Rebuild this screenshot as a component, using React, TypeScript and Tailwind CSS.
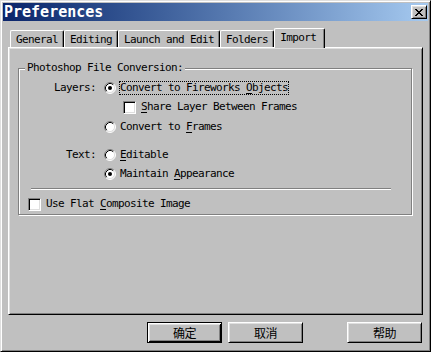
import React from 'react';

const mono = { fontFamily: '"DejaVu Sans Mono", monospace' };

const Radio: React.FC<{ checked?: boolean }> = ({ checked }) => (
  <svg width="12" height="12" viewBox="0 0 12 12" className="shrink-0">
    <circle cx="6" cy="6" r="5" fill="#fff" />
    <path d="M2.11 9.89A5.5 5.5 0 0 1 9.89 2.11" fill="none" stroke="#808080" />
    <path d="M9.89 2.11A5.5 5.5 0 0 1 2.11 9.89" fill="none" stroke="#fff" />
    <path d="M2.82 9.18A4.5 4.5 0 0 1 9.18 2.82" fill="none" stroke="#000" />
    <path d="M9.18 2.82A4.5 4.5 0 0 1 2.82 9.18" fill="none" stroke="#dfdfdf" />
    {checked && <circle cx="6" cy="6" r="2" fill="#000" />}
  </svg>
);

const Checkbox: React.FC = () => (
  <div className="w-[13px] h-[13px] shrink-0 bg-white border border-t-[#808080] border-l-[#808080] border-r-white border-b-white shadow-[inset_1px_1px_0_#000,inset_-1px_-1px_0_#dfdfdf]" />
);

// text with one underlined access key
const Label: React.FC<{ text: string; k: number; focus?: boolean }> = ({ text, k, focus }) => (
  <span
    className={`h-[14px] leading-[12px] whitespace-pre border ${focus ? 'border-dotted border-black' : 'border-transparent'}`}
  >
    {text.slice(0, k)}
    <span className="underline underline-offset-[2px]">{text[k]}</span>
    {text.slice(k + 1)}
  </span>
);

const Tab: React.FC<{ label: string; active?: boolean }> = ({ label, active }) => (
  <div
    className={`pt-[2px] leading-[14px] bg-[#c0c0c0] border-l border-t border-white border-r border-r-black shadow-[inset_-1px_0_0_#808080] rounded-tl-[2px] rounded-tr-[2px] ${
      active ? 'h-[20px] -mb-px relative z-10 pl-[5px] pr-[8px]' : 'h-[17px] px-[5px]'
    }`}
  >
    {label}
  </div>
);

const Button: React.FC<{ label: string; primary?: boolean; className?: string }> = ({ label, primary, className }) => (
  <button
    className={`w-[75px] h-[21px] flex items-center justify-center text-[12px] text-black bg-[#c0c0c0] ${
      primary
        ? 'border border-black shadow-[inset_1px_1px_0_#fff,inset_-1px_-1px_0_#000,inset_2px_2px_0_#dfdfdf,inset_-2px_-2px_0_#808080]'
        : 'border border-t-white border-l-white border-r-black border-b-black shadow-[inset_1px_1px_0_#dfdfdf,inset_-1px_-1px_0_#808080]'
    } ${className ?? ''}`}
    style={{ fontFamily: '"Noto Sans CJK SC", sans-serif' }}
  >
    {label}
  </button>
);

export default function App() {
  return (
    <div
      className="w-[431px] h-[352px] bg-[#c0c0c0] text-black text-[11px] tracking-[-0.62px] p-[2px] border border-t-[#dfdfdf] border-l-[#dfdfdf] border-r-black border-b-black shadow-[inset_1px_1px_0_#fff,inset_-1px_-1px_0_#808080] flex flex-col"
      style={mono}
    >
      {/* title bar */}
      <div className="h-[18px] flex items-center justify-between bg-gradient-to-r from-[#0a246a] to-[#a6caf0]">
        <span className="pl-[1px] text-white font-bold text-[15px] tracking-normal leading-[18px]">Preferences</span>
        <div className="mr-[1px] w-[16px] h-[14px] flex items-center justify-center bg-[#c0c0c0] border border-t-white border-l-white border-r-black border-b-black shadow-[inset_1px_1px_0_#dfdfdf,inset_-1px_-1px_0_#808080]">
          <svg width="8" height="7" viewBox="0 0 8 7" shapeRendering="crispEdges">
            <path
              fill="#000"
              d="M0 0h2v1H0zM6 0h2v1H6zM1 1h2v1H1zM5 1h2v1H5zM2 2h4v1H2zM3 3h2v1H3zM2 4h4v1H2zM1 5h2v1H1zM5 5h2v1H5zM0 6h2v1H0zM6 6h2v1H6z"
            />
          </svg>
        </div>
      </div>

      {/* tabs */}
      <div className="mt-[7px] ml-[7px] h-[19px] flex items-end">
        <Tab label="General" />
        <Tab label="Editing" />
        <Tab label="Launch and Edit" />
        <Tab label="Folders" />
        <Tab label="Import" active />
      </div>

      {/* tab panel */}
      <div className="ml-[5px] w-[415px] h-[268px] border border-t-white border-l-white border-r-black border-b-black shadow-[inset_1px_1px_0_#dfdfdf,inset_-1px_-1px_0_#808080]">
        <div className="relative ml-[9px] mt-[20px] w-[394px] h-[147px] border border-[#808080] shadow-[inset_1px_1px_0_#fff,1px_1px_0_#fff]">
          <span className="absolute left-[6px] top-[-8px] px-[2px] leading-[14px] bg-[#c0c0c0]">Photoshop File Conversion:</span>

          <div className="mt-[12px] h-[14px] flex items-center">
            <span className="w-[77px] text-right">Layers:</span>
            <span className="ml-[8px]"><Radio checked /></span>
            <span className="ml-[3px] flex"><Label text="Convert to Fireworks Objects" k={21} focus /></span>
          </div>

          <div className="mt-[5px] h-[14px] pl-[104px] flex items-center">
            <Checkbox />
            <span className="ml-[4px] flex"><Label text="Share Layer Between Frames" k={0} /></span>
          </div>

          <div className="mt-[6px] h-[14px] pl-[85px] flex items-center">
            <Radio />
            <span className="ml-[3px] flex"><Label text="Convert to Frames" k={11} /></span>
          </div>

          <div className="mt-[14px] h-[14px] flex items-center">
            <span className="w-[77px] text-right">Text:</span>
            <span className="ml-[8px]"><Radio /></span>
            <span className="ml-[3px] flex"><Label text="Editable" k={0} /></span>
          </div>

          <div className="mt-[5px] h-[14px] pl-[85px] flex items-center">
            <Radio checked />
            <span className="ml-[3px] flex"><Label text="Maintain Appearance" k={9} /></span>
          </div>

          <div className="mt-[7px] ml-[12px] w-[360px] border-t border-t-[#808080] border-b border-b-white" />

          <div className="mt-[7px] h-[14px] pl-[9px] flex items-center">
            <Checkbox />
            <span className="ml-[4px] flex"><Label text="Use Flat Composite Image" k={9} /></span>
          </div>
        </div>
      </div>

      {/* buttons */}
      <div className="mt-[7px] pl-[144px] flex">
        <Button label="确定" primary />
        <Button label="取消" className="ml-[6px]" />
        <Button label="帮助" className="ml-[44px]" />
      </div>
    </div>
  );
}
